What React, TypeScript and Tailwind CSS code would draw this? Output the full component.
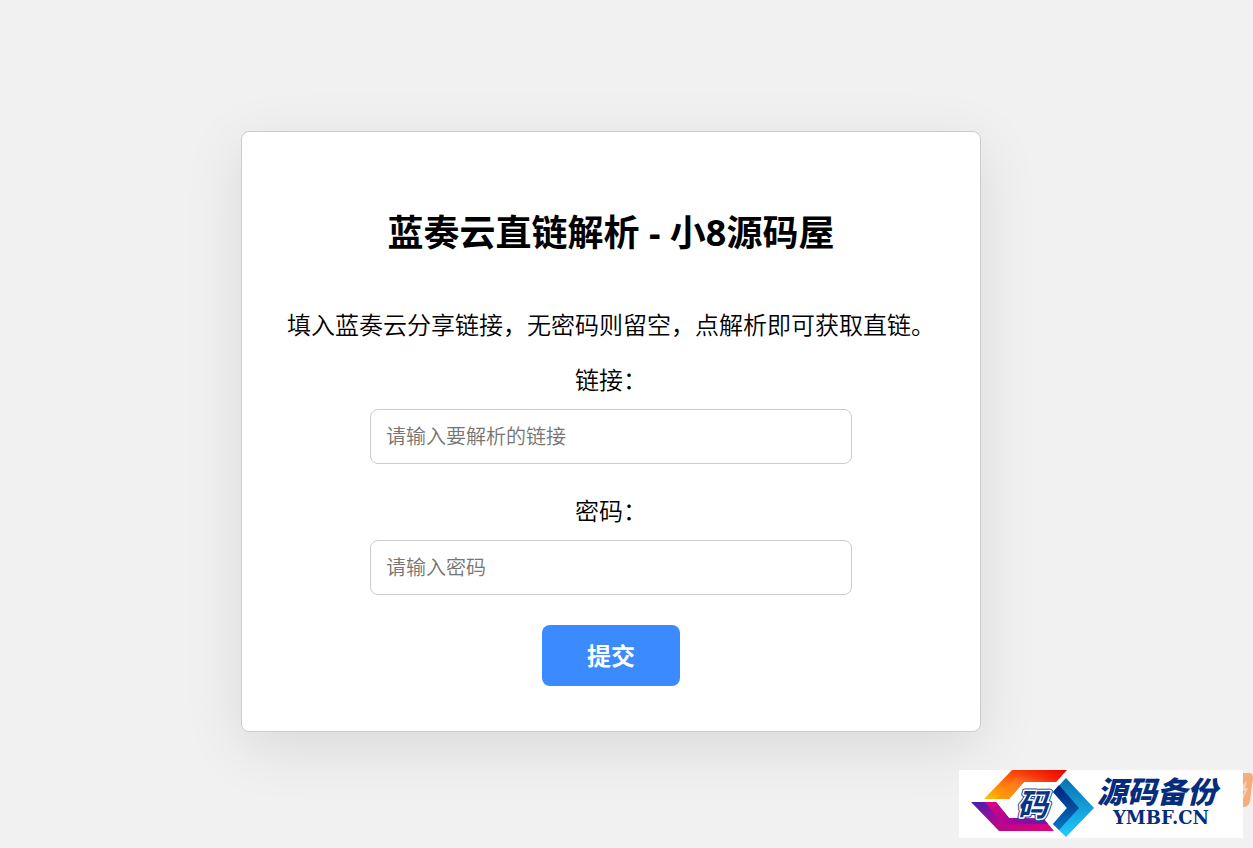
import React, { useState } from "react";

const Field: React.FC<{
    id: string,
    label: string,
    placeholder: string,
    value: string,
    handleChange: (e: React.ChangeEvent<HTMLInputElement>) => void
}> = ({ id, label, placeholder, value, handleChange }) => {
    return (
        <div className="flex w-full flex-col items-center">
            <label htmlFor={id} className="mb-[13px] text-2xl leading-[33px] font-[350]">{label}</label>
            <input
                type="text"
                id={id}
                placeholder={placeholder}
                value={value}
                onChange={handleChange}
                className="w-full max-w-[482px] rounded-lg border border-[#ccc] bg-white px-[15px] py-3 text-xl leading-[29px] font-[350] placeholder-[#757575] focus:outline-none focus:border-[#3b8aff]"
            />
        </div>
    );
}

const Watermark: React.FC = () => {
    return (
        <div className="fixed right-0 bottom-[10px] flex items-start">
            <svg className="h-[68px] w-[284px] bg-white" viewBox="0 0 284 68" role="img" aria-label="源码备份 YMBF.CN">
                <defs>
                    <linearGradient id="warm" x1="0" y1="1" x2="1" y2="0">
                        <stop offset="0" stopColor="#ffc400" />
                        <stop offset="0.45" stopColor="#ff6a10" />
                        <stop offset="1" stopColor="#e60000" />
                    </linearGradient>
                    <linearGradient id="warmEdge" x1="0" y1="1" x2="1" y2="0">
                        <stop offset="0" stopColor="#ffa000" />
                        <stop offset="0.5" stopColor="#ff7820" />
                        <stop offset="1" stopColor="#f50800" />
                    </linearGradient>
                    <linearGradient id="violet" x1="0" y1="0" x2="1" y2="1">
                        <stop offset="0" stopColor="#4420b0" />
                        <stop offset="0.5" stopColor="#b00890" />
                        <stop offset="1" stopColor="#e80078" />
                    </linearGradient>
                    <linearGradient id="violetEdge" x1="0" y1="0" x2="1" y2="0">
                        <stop offset="0" stopColor="#e0007c" />
                        <stop offset="0.5" stopColor="#9808a0" />
                        <stop offset="1" stopColor="#5a20b0" />
                    </linearGradient>
                    <linearGradient id="sky" x1="0" y1="0" x2="0" y2="1">
                        <stop offset="0" stopColor="#0870b0" />
                        <stop offset="1" stopColor="#20ccff" />
                    </linearGradient>
                    <linearGradient id="navy" x1="0" y1="0" x2="0" y2="1">
                        <stop offset="0" stopColor="#00207c" />
                        <stop offset="1" stopColor="#0878c0" />
                    </linearGradient>
                    <radialGradient id="glow">
                        <stop offset="0" stopColor="#c8f0ff" />
                        <stop offset="1" stopColor="#fff" stopOpacity="0" />
                    </radialGradient>
                </defs>
                <path d="M53 0H108L97 12H65L50 29H25Z" fill="url(#warm)" />
                <path d="M58 6H102L97 12H65L50 29H37L48 17Z" fill="url(#warmEdge)" />
                <path d="M12 32H37L50 48H84L95 61H40Z" fill="url(#violet)" />
                <path d="M26 32H37L50 48H84L89 54H44Z" fill="url(#violetEdge)" />
                <path d="M107 8L135 38L107 67L94 54L108 38L94 22Z" fill="url(#sky)" />
                <path d="M100 15L120 38L100 60L94 54L108 38L94 22Z" fill="url(#navy)" />
                <ellipse cx="75" cy="35" rx="27" ry="15" fill="url(#glow)" />
                <text x="58" y="46" fill="#0a3585" stroke="#12448f" strokeWidth="5" strokeLinejoin="round" paintOrder="stroke" fontFamily="'Noto Sans CJK SC', sans-serif" fontWeight="700" fontStyle="italic" fontSize="31">码</text>
                <text x="58" y="46" fill="#0a3585" stroke="#fff" strokeWidth="3" strokeLinejoin="round" paintOrder="stroke" fontFamily="'Noto Sans CJK SC', sans-serif" fontWeight="700" fontStyle="italic" fontSize="31" aria-hidden="true">码</text>
                <text x="138" y="33" fill="#062c7c" fontFamily="'Noto Sans CJK SC', sans-serif" fontWeight="900" fontStyle="italic" fontSize="30">源码备份</text>
                <text x="154" y="54" fill="#062c7c" fontFamily="'DejaVu Serif', serif" fontWeight="700" fontSize="18">YMBF.CN</text>
            </svg>
            <svg className="mt-[3px] h-[34px] w-[10px]" viewBox="0 0 10 34" aria-hidden="true">
                <path d="M0 0H6Q10 0 10 5L7 28Q6 34 0 34Z" fill="#f6ad7b" />
                <path d="M0 12L4 7L2 15H5L0 26V22L2 18H0Z" fill="#fbd3b5" />
            </svg>
        </div>
    );
}

const App: React.FC = () => {
    const [form, setForm] = useState({ url: "", pwd: "" });

    const handleChange = (e: React.ChangeEvent<HTMLInputElement>) => {
        setForm({ ...form, [e.target.id]: e.target.value });
    };

    const handleSubmit = (e: React.FormEvent<HTMLFormElement>) => {
        e.preventDefault();
    };

    return (
        <div className="flex min-h-screen items-start justify-center bg-[#f1f1f1] pt-[131px] pr-[31px] text-black font-['Noto_Sans','Noto_Sans_CJK_SC',sans-serif]">
            <main className="flex w-full max-w-[740px] flex-col items-center rounded-lg border border-[#ccc] bg-white p-[45px] shadow-[0_15px_60px_rgba(0,0,0,0.1)]">
                <h1 className="mt-8 text-4xl leading-[48px] font-bold">蓝奏云直链解析 - 小8源码屋</h1>
                <p className="mt-[52px] text-2xl font-[350] whitespace-nowrap">填入蓝奏云分享链接，无密码则留空，点解析即可获取直链。</p>
                <form onSubmit={handleSubmit} className="mt-[22px] flex w-full flex-col items-center gap-[30px]">
                    <Field id="url" label="链接：" placeholder="请输入要解析的链接" value={form.url} handleChange={handleChange} />
                    <Field id="pwd" label="密码：" placeholder="请输入密码" value={form.pwd} handleChange={handleChange} />
                    <button type="submit" className="rounded-lg bg-[#3b8aff] px-[45px] py-[14px] text-2xl leading-[33px] font-bold text-white">提交</button>
                </form>
            </main>
            <Watermark />
        </div>
    );
}

export default App;
